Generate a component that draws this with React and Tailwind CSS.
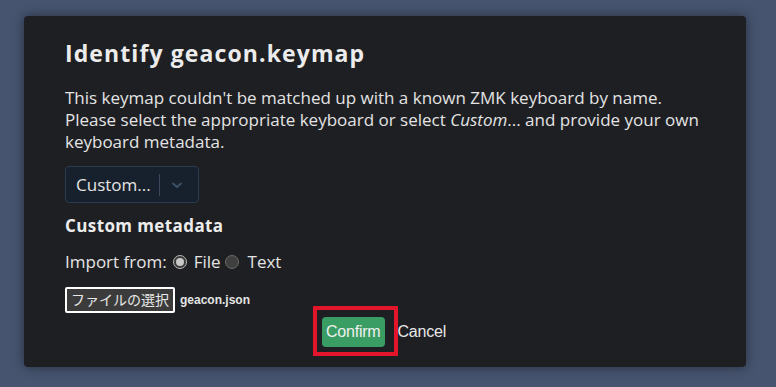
export default function App() {
  return (
    <div className="h-[387px] w-[776px] bg-[#46546f] pt-4 pl-6 overflow-hidden" style={{ fontFamily: '"Open Sans", "Noto Sans CJK JP", sans-serif' }}>
      <div className="w-[722px] h-[351px] bg-[#1e1f23] rounded-sm shadow-[0_0_12px_rgba(0,0,0,0.45)] pl-[41px] pr-6 pt-[22px] text-[#e4e4e4]">
        <h1 className="text-[23px] font-bold leading-[30px] tracking-[1.1px] text-[#ececec]">
          Identify geacon.keymap
        </h1>
        <p className="mt-[19px] text-[17px] leading-[22px]">
          This keymap couldn't be matched up with a known ZMK keyboard by name.
          <br />
          Please select the appropriate keyboard or select <em>Custom</em>... and provide your own
          <br />
          keyboard metadata.
        </p>

        <div className="mt-[13px] flex h-[37px] w-[134px] items-center rounded-[4px] border border-[#2b3b4d] bg-[#17212d]">
          <span className="pl-[10px] text-[17px]">Custom...</span>
          <span className="ml-[8px] h-[22px] w-px bg-[#3a4a5c]" />
          <svg className="ml-[11px]" width="12" height="12" viewBox="0 0 12 12" fill="none">
            <path d="M2 4.5 L6 8 L10 4.5" stroke="#3f5266" strokeWidth="1.8" strokeLinecap="round" strokeLinejoin="round" />
          </svg>
        </div>

        <h2 className="mt-[11px] text-[17px] font-bold leading-[24px] tracking-[0.4px] text-[#ececec]">
          Custom metadata
        </h2>

        <div className="mt-[13px] flex items-center text-[17px] leading-[22px]">
          <span>Import from:</span>
          <span className="ml-[6px] flex h-[14px] w-[14px] items-center justify-center rounded-full border border-[#b8b8b8] bg-[#3a3a3a]">
            <span className="h-[8px] w-[8px] rounded-full bg-[#c8c8c8]" />
          </span>
          <span className="ml-[7px]">File</span>
          <span className="ml-[4px] h-[14px] w-[14px] rounded-full border border-[#6a6a6a] bg-[#3f3f3f]" />
          <span className="ml-[9px]">Text</span>
        </div>

        <div className="mt-[14px] flex items-center">
          <button className="h-[26px] rounded-[2px] border-2 border-white bg-[#3b3b3b] px-[4px] text-[14px] leading-none text-[#e8e8e8]">
            ファイルの選択
          </button>
          <span className="ml-[5px] text-[12px] font-bold text-[#e4e4e4]" style={{ fontFamily: '"Liberation Sans", Arial, sans-serif' }}>
            geacon.json
          </span>
        </div>

        <div className="mt-[4px] flex justify-center pr-[19px]" style={{ fontFamily: '"Liberation Sans", Arial, sans-serif' }}>
          <div className="flex items-center">
            <span className="relative">
              <button className="h-[30px] rounded-[4px] bg-[#3a9d63] px-[4px] text-[16px] tracking-[-0.2px] text-[#f0f0f0]">
                Confirm
              </button>
              <span className="pointer-events-none absolute -left-[9px] -right-[13px] -top-[11px] -bottom-[9px] border-[4px] border-[#e3152b]" />
            </span>
            <span className="ml-[13px] text-[16px] tracking-[-0.2px] text-[#e8e8e8]">Cancel</span>
          </div>
        </div>
      </div>
    </div>
  );
}
